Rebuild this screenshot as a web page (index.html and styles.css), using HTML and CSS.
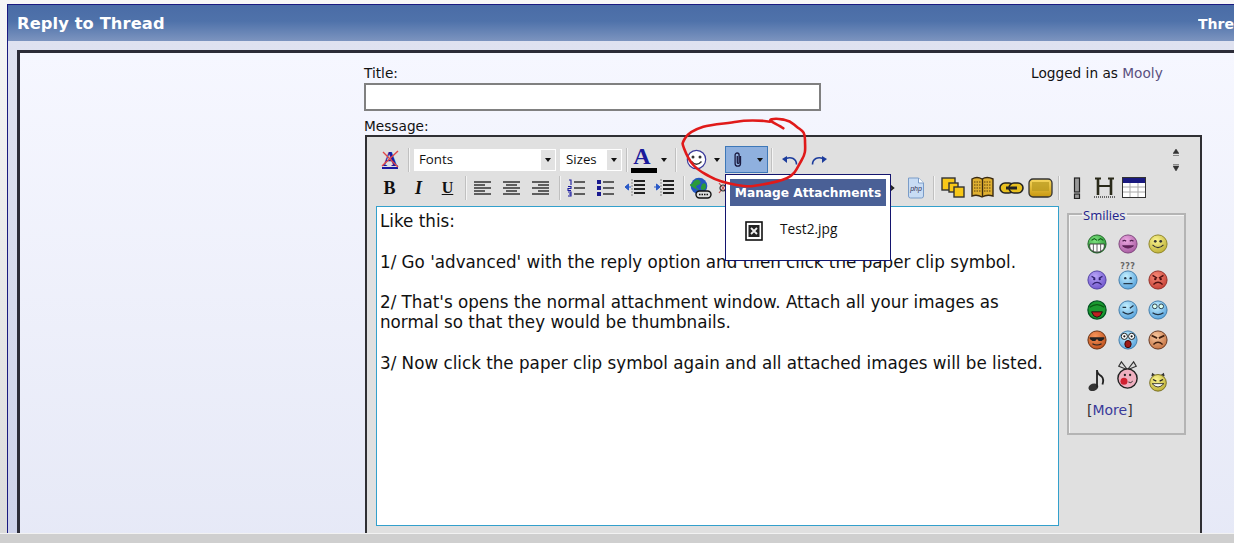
FILE: index.html
```html
<!DOCTYPE html>
<html lang="en">
<head>
<meta charset="utf-8">
<title>Reply to Thread</title>
<link rel="stylesheet" href="styles.css">
</head>
<body>
<svg class="defs" width="0" height="0" aria-hidden="true">
  <defs>
    <radialGradient id="gGreen" cx=".4" cy=".3" r=".8"><stop offset="0" stop-color="#7fe27f"/><stop offset="1" stop-color="#1c8f2c"/></radialGradient>
    <radialGradient id="gPink" cx=".4" cy=".3" r=".8"><stop offset="0" stop-color="#eda8e2"/><stop offset="1" stop-color="#a0559a"/></radialGradient>
    <radialGradient id="gYellow" cx=".4" cy=".3" r=".8"><stop offset="0" stop-color="#fbf590"/><stop offset="1" stop-color="#b8a92e"/></radialGradient>
    <radialGradient id="gPurple" cx=".4" cy=".3" r=".8"><stop offset="0" stop-color="#b8a4f8"/><stop offset="1" stop-color="#6a4fc8"/></radialGradient>
    <radialGradient id="gBlue" cx=".4" cy=".3" r=".8"><stop offset="0" stop-color="#c4f0ff"/><stop offset="1" stop-color="#4c9ad8"/></radialGradient>
    <radialGradient id="gRed" cx=".4" cy=".3" r=".8"><stop offset="0" stop-color="#f88a78"/><stop offset="1" stop-color="#c03a30"/></radialGradient>
    <radialGradient id="gOrange" cx=".4" cy=".3" r=".8"><stop offset="0" stop-color="#f8965a"/><stop offset="1" stop-color="#b84a18"/></radialGradient>
    <radialGradient id="gTan" cx=".4" cy=".3" r=".8"><stop offset="0" stop-color="#f8c8a0"/><stop offset="1" stop-color="#c06a38"/></radialGradient>
    <linearGradient id="gGold" x1="0" y1="0" x2="0" y2="1"><stop offset="0" stop-color="#f8d860"/><stop offset="1" stop-color="#c89810"/></linearGradient>
    <g id="lines-left"><path d="M1 2h17M1 5h11M1 8h17M1 11h11M1 14h17" stroke="#333" stroke-width="1.6" fill="none"/></g>
    <g id="lines-center"><path d="M1 2h17M4 5h11M1 8h17M4 11h11M1 14h17" stroke="#333" stroke-width="1.6" fill="none"/></g>
    <g id="lines-right"><path d="M1 2h17M7 5h11M1 8h17M7 11h11M1 14h17" stroke="#333" stroke-width="1.6" fill="none"/></g>
  </defs>
</svg>

<div class="page">
  <div class="view">
    <div class="frame">
      <div class="head">
        <span class="head-title">Reply to Thread</span>
        <span class="head-side">Thread Review</span>
      </div>
      <div class="band">
        <div class="inner">
          <div class="form">
            <div class="title-row">
              <div class="title-col">
                <div class="label">Title:</div>
                <input class="title-input" type="text" aria-label="Title">
              </div>
              <div class="logged">Logged in as <a class="user">Mooly</a></div>
            </div>
            <div class="label msg-label">Message:</div>

            <div class="editor">
              <div class="toolbar">
                <div class="tb-row">
                  <span class="cell">
                    <svg width="22" height="26" viewBox="0 0 22 26"><text x="11" y="19" class="t-clear">A</text><path d="M3 21h16" stroke="#1a1aa0" stroke-width="2"/><path d="M4 5L19 20M19 4L3 19" stroke="#e04848" stroke-width="1.4"/></svg>
                  </span>
                  <i class="sep sep-a"></i>
                  <span class="select select-font"><span class="select-text">Fonts</span><b class="select-arrow"></b></span>
                  <span class="select select-size"><span class="select-text">Sizes</span><b class="select-arrow"></b></span>
                  <i class="sep sep-b"></i>
                  <span class="color-a"><span class="color-letter">A</span><span class="color-bar"></span></span>
                  <b class="arrow arrow-color"></b>
                  <i class="sep sep-c"></i>
                  <svg class="smile-tool" width="21" height="21" viewBox="0 0 21 21"><circle cx="10.5" cy="10.5" r="9.2" fill="#fff" stroke="#3a3a9a" stroke-width="1.2"/><circle cx="7" cy="8" r="1.5" fill="#333"/><circle cx="14" cy="8" r="1.5" fill="#333"/><path d="M5.5 12.5q5 5.5 10 0" stroke="#333" stroke-width="1.4" fill="none"/></svg>
                  <b class="arrow arrow-smile"></b>
                  <span class="clip-btn">
                    <svg width="12" height="17" viewBox="0 0 12 17"><path d="M8.5 5v7.5a2.7 2.7 0 0 1-5.400 0V4a2 2 0 0 1 4 0v7.500a.9.900 0 0 1-1.800 0V5" fill="none" stroke="#1a1a40" stroke-width="1.300"/></svg>
                    <b class="arrow arrow-clip"></b>
                  </span>
                  <i class="sep sep-d"></i>
                  <svg class="undo" width="17" height="12" viewBox="0 0 17 12"><path d="M15.500 10.500C15.500 4.500 10 2.500 5 4.500" fill="none" stroke="#1c3c9c" stroke-width="1.600"/><path d="M1 5l5-3v7z" fill="#1c3c9c"/></svg>
                  <svg class="redo" width="17" height="12" viewBox="0 0 17 12"><path d="M1.500 10.500C1.500 4.500 7 2.500 12 4.500" fill="none" stroke="#1c3c9c" stroke-width="1.600"/><path d="M16 5l-5-3v7z" fill="#1c3c9c"/></svg>
                </div>
                <div class="tb-row">
                  <span class="cell"><span class="fmt fmt-b">B</span></span>
                  <span class="cell"><span class="fmt fmt-i">I</span></span>
                  <span class="cell"><span class="fmt fmt-u">U</span></span>
                  <i class="sep sep-e"></i>
                  <span class="cell"><svg width="19" height="16" viewBox="0 0 19 16"><use href="#lines-left"/></svg></span>
                  <span class="cell"><svg width="19" height="16" viewBox="0 0 19 16"><use href="#lines-center"/></svg></span>
                  <span class="cell"><svg width="19" height="16" viewBox="0 0 19 16"><use href="#lines-right"/></svg></span>
                  <i class="sep sep-f"></i>
                  <span class="cell"><svg width="19" height="18" viewBox="0 0 19 18"><path d="M7 3h11M7 9h11M7 15h11" stroke="#333" stroke-width="1.600"/><path d="M2 1h2v5M1 7.500h3v2H1v2h3M1 13h3v2H2h2v2H1" stroke="#1a1aa0" stroke-width="1.100" fill="none"/></svg></span>
                  <span class="cell"><svg width="19" height="18" viewBox="0 0 19 18"><path d="M7 3h11M7 9h11M7 15h11" stroke="#333" stroke-width="1.600"/><path d="M1 1h4v4H1zM1 7h4v4H1zM1 13h4v4H1z" fill="#1a1a90"/></svg></span>
                  <span class="cell"><svg width="22" height="20" viewBox="0 0 22 20"><path d="M10 3h11M10 7h11M10 11h11M10 15h11" stroke="#222" stroke-width="1.800"/><path d="M8 1v18" stroke="#888" stroke-dasharray="2 1"/><path d="M7 9H3M4.500 6L1 9l3.500 3z" stroke="#2a5ac8" fill="#2a5ac8"/></svg></span>
                  <span class="cell"><svg width="22" height="20" viewBox="0 0 22 20"><path d="M10 3h11M10 7h11M10 11h11M10 15h11" stroke="#222" stroke-width="1.800"/><path d="M8 1v18" stroke="#888" stroke-dasharray="2 1"/><path d="M1 9h4M3.500 6L7 9l-3.500 3z" stroke="#2a5ac8" fill="#2a5ac8"/></svg></span>
                  <i class="sep sep-g"></i>
                  <svg class="globe" width="22" height="22" viewBox="0 0 22 22"><circle cx="9" cy="9" r="8.300" fill="#2456c0"/><path d="M4 4q4-3 6 0t-2 4 0 4-4-1-2-4zM12 7q4-2 4 2t-3 4-2-3z" fill="#2a9a3a"/><rect x="6" y="14" width="15" height="7" rx="3.500" fill="#ddd" stroke="#111" stroke-width="1.400"/><path d="M9 17.500h9" stroke="#111" stroke-width="1.500" stroke-dasharray="1.500 1"/></svg>
                  <svg class="unlink" width="12" height="14" viewBox="0 0 12 14"><path d="M2 2l8 10M10 2L2 12" stroke="#c05050" stroke-width="1.200"/><circle cx="6" cy="7" r="3" fill="none" stroke="#333" stroke-width="1.200"/></svg>
                  <svg class="code" width="10" height="14" viewBox="0 0 10 14"><path d="M2 2l6 5-6 5" fill="none" stroke="#222" stroke-width="2.200"/></svg>
                  <svg class="php" width="18" height="22" viewBox="0 0 18 22"><path d="M1.500 1h10l5 5v13a2 2 0 0 1-2 2h-11a2 2 0 0 1-2-2z" fill="#c8dcf4" stroke="#7a9cc8"/><path d="M11.500 1v5h5" fill="#fff" stroke="#7a9cc8"/><text x="9" y="14" class="t-php">php</text></svg>
                  <i class="sep sep-h"></i>
                  <svg class="copy" width="24" height="21" viewBox="0 0 24 21"><rect x="1" y="1" width="13" height="12" fill="#f8c818" stroke="#333" stroke-width="1.400"/><rect x="8" y="6" width="9" height="9" fill="#f8c818" stroke="#333" stroke-width="1.400"/><rect x="13" y="10" width="10" height="10" fill="#f8c818" stroke="#333" stroke-width="1.400"/></svg>
                  <svg class="book" width="23" height="24" viewBox="0 0 23 24"><path d="M1 3q5-3 10 0 5-3 11 0v17q-6-2-11 1-5-3-10-1z" fill="#e0b030" stroke="#3a2a10" stroke-width="1.400"/><path d="M11.500 3v18" stroke="#3a2a10" stroke-width="1.400"/><path d="M3 6h7M3 9h7M3 12h7M3 15h7M13 6h7M13 9h7M13 12h7M13 15h7" stroke="#5a4010" stroke-dasharray="1.500 1"/></svg>
                  <svg class="chain" width="25" height="14" viewBox="0 0 25 14"><rect x="1" y="2" width="14" height="10" rx="5" fill="#e8c020" stroke="#222" stroke-width="1.600"/><rect x="10" y="2" width="14" height="10" rx="5" fill="#e8c020" stroke="#222" stroke-width="1.600"/><path d="M7 7h11" stroke="#222" stroke-width="3"/></svg>
                  <svg class="quote" width="25" height="20" viewBox="0 0 25 20"><rect x="1" y="1" width="23" height="18" rx="4" fill="url(#gGold)" stroke="#333" stroke-width="1.300"/><rect x="4" y="4" width="17" height="9" fill="#b89820" opacity=".7"/></svg>
                  <i class="sep sep-i"></i>
                  <svg class="warn" width="8" height="22" viewBox="0 0 8 22"><rect x="1.500" y="1" width="5" height="14" fill="#999" stroke="#222" stroke-width="1.200"/><rect x="1.500" y="17" width="5" height="4.500" fill="#999" stroke="#222" stroke-width="1.200"/></svg>
                  <svg class="hr" width="21" height="22" viewBox="0 0 21 22"><path d="M4 1v17M17 1v17" stroke="#2a2a1a" stroke-width="2.600"/><path d="M1 1.500h6M14 1.500h6M5 9h11" stroke="#2a2a1a" stroke-width="2"/><path d="M0 20h21" stroke="#666" stroke-width="2" stroke-dasharray="1 1"/></svg>
                  <svg class="table" width="24" height="21" viewBox="0 0 24 21"><rect x=".5" y=".5" width="23" height="20" fill="#fff" stroke="#333"/><rect x="1" y="1" width="22" height="5" fill="#1a1a80"/><path d="M1 10h22M1 15h22M8 6v14M16 6v14" stroke="#aaa"/></svg>
                </div>
                <div class="collapse">
                  <svg width="6" height="23" viewBox="0 0 6 23"><path d="M3 0l3 4.500H0zM0 6.500h6" fill="#333" stroke="#333" stroke-width=".5"/><path d="M0 15.500h6M0 17l3 5 3-5z" fill="#333" stroke="#333" stroke-width=".5"/></svg>
                </div>
              </div>

              <div class="editor-body">
                <div class="text-area">Like this:<br><br>1/ Go 'advanced' with the reply option and then click the paper clip symbol.<br><br>2/ That's opens the normal attachment window. Attach all your images as<br>normal so that they would be thumbnails.<br><br>3/ Now click the paper clip symbol again and all attached images will be listed.</div>
                <fieldset class="smilies">
                  <legend class="smilies-legend">Smilies</legend>
                  <div class="smilies-grid">
                    <svg class="face" viewBox="0 0 22 22"><circle cx="11" cy="11" r="10" fill="url(#gGreen)" stroke="#186020"/><path d="M3 11h16v3a8 6 0 0 1-16 0z" fill="#fff" stroke="#333"/><path d="M7 11v8M11 11v9M15 11v8" stroke="#555"/><path d="M5 7l3-2 3 2M12 7l3-2 3 2" fill="none" stroke="#0a5a14" stroke-width="1.200"/></svg>
                    <svg class="face" viewBox="0 0 22 22"><circle cx="11" cy="11" r="10" fill="url(#gPink)" stroke="#7a4078"/><path d="M5 8q2-2 4 0M13 8q2-2 4 0" fill="none" stroke="#502050" stroke-width="1.300"/><path d="M5 13q6 5 12 0z" fill="#702060" stroke="#502050"/></svg>
                    <svg class="face" viewBox="0 0 22 22"><circle cx="11" cy="11" r="10" fill="url(#gYellow)" stroke="#8a8020"/><circle cx="8" cy="8" r="1.500" fill="#333"/><circle cx="14" cy="8" r="1.500" fill="#333"/><path d="M5 12q6 6 12 0" fill="none" stroke="#333" stroke-width="1.300"/></svg>

                    <svg class="face" viewBox="0 0 22 22"><circle cx="11" cy="11" r="10" fill="url(#gPurple)" stroke="#4a3aa0"/><path d="M5 7l4 2M17 7l-4 2" stroke="#302070" stroke-width="1.300"/><circle cx="8" cy="10" r="1.300" fill="#302070"/><circle cx="14" cy="10" r="1.300" fill="#302070"/><path d="M6 16q5-5 10 0" fill="none" stroke="#302070" stroke-width="1.300"/></svg>
                    <span class="face-wrap"><span class="qqq">???</span><svg class="face" viewBox="0 0 22 22"><circle cx="11" cy="11" r="10" fill="url(#gBlue)" stroke="#3a78a8"/><circle cx="8" cy="9" r="1.300" fill="#234"/><circle cx="14" cy="9" r="1.300" fill="#234"/><path d="M6 15h10" stroke="#234" stroke-width="1.300"/></svg></span>
                    <svg class="face" viewBox="0 0 22 22"><circle cx="11" cy="11" r="10" fill="url(#gRed)" stroke="#902820"/><path d="M5 6l5 3M17 6l-5 3" stroke="#501010" stroke-width="1.600"/><circle cx="8" cy="10" r="1.300" fill="#501010"/><circle cx="14" cy="10" r="1.300" fill="#501010"/><path d="M6 16q5-5 10 0" fill="none" stroke="#501010" stroke-width="1.400"/></svg>

                    <svg class="face" viewBox="0 0 22 22"><circle cx="11" cy="11" r="10" fill="#1a9a30" stroke="#052"  stroke-width="1.400"/><path d="M3 8q8-6 16 0" fill="none" stroke="#0a5a14" stroke-width="1.300"/><path d="M5 13h12q-2 6-6 6t-6-6z" fill="#c02020" stroke="#111"/></svg>
                    <svg class="face" viewBox="0 0 22 22"><circle cx="11" cy="11" r="10" fill="url(#gBlue)" stroke="#3a78a8"/><path d="M5 8h4M13 9l4-3" stroke="#234" stroke-width="1.400"/><path d="M5 13q6 5 12 0" fill="none" stroke="#234" stroke-width="1.400"/></svg>
                    <svg class="face" viewBox="0 0 22 22"><circle cx="11" cy="11" r="10" fill="url(#gBlue)" stroke="#3a78a8"/><circle cx="7.500" cy="7" r="2.600" fill="#dfe" stroke="#234"/><circle cx="14.500" cy="7" r="2.600" fill="#dfe" stroke="#234"/><path d="M5 14q6 4 12 0" fill="none" stroke="#234" stroke-width="1.400"/></svg>

                    <svg class="face" viewBox="0 0 22 22"><circle cx="11" cy="11" r="10" fill="url(#gOrange)" stroke="#602808"/><path d="M3 8h16v2l-3 2h-3l-2-2-2 2H6l-3-2z" fill="#222"/><path d="M6 15q5 3 10 0" fill="none" stroke="#222" stroke-width="1.300"/></svg>
                    <svg class="face" viewBox="0 0 22 22"><circle cx="11" cy="11" r="10" fill="url(#gBlue)" stroke="#3a78a8"/><circle cx="7" cy="7" r="3.400" fill="#fff" stroke="#111"/><circle cx="15" cy="7" r="3.400" fill="#fff" stroke="#111"/><circle cx="7" cy="7" r="1.200" fill="#111"/><circle cx="15" cy="7" r="1.200" fill="#111"/><ellipse cx="11" cy="15.500" rx="3.500" ry="4" fill="#a01c18" stroke="#300"/></svg>
                    <svg class="face" viewBox="0 0 22 22"><circle cx="11" cy="11" r="10" fill="url(#gTan)" stroke="#603018"/><path d="M4 6l6 3M18 6l-6 3" stroke="#402010" stroke-width="2"/><path d="M6 16q5-5 10 0" fill="none" stroke="#402010" stroke-width="1.500"/></svg>

                    <svg class="face face-note" viewBox="0 0 22 26"><ellipse cx="7" cy="21" rx="5.500" ry="4" fill="#333" transform="rotate(-20 7 21)"/><path d="M11 21V2q0 4 5 7 3 3 1 9" fill="none" stroke="#222" stroke-width="2"/></svg>
                    <svg class="face face-pig" viewBox="0 0 24 34"><path d="M12 11L5 2l-3 5zM12 11l7-9 3 5z" fill="#ddd" stroke="#333" stroke-width="1.300"/><circle cx="12" cy="21" r="11" fill="#f0b0c0" stroke="#222" stroke-width="1.600"/><circle cx="8" cy="24" r="4" fill="#d02030"/><circle cx="9" cy="17" r="1.300" fill="#222"/><circle cx="15" cy="17" r="1.300" fill="#222"/><path d="M13 25q3 2 5-1" fill="none" stroke="#222"/></svg>
                    <svg class="face face-devil" viewBox="0 0 22 24"><path d="M3 5l1-4 4 3zM19 5l-1-4-4 3z" fill="#333"/><circle cx="11" cy="13" r="10" fill="url(#gYellow)" stroke="#6a6010"/><path d="M5 9l4 2M17 9l-4 2" stroke="#222" stroke-width="1.500"/><path d="M4 14q7 8 14 0z" fill="#fff" stroke="#222"/></svg>
                  </div>
                  <div class="more">[<a class="more-link">More</a>]</div>
                </fieldset>
              </div>
            </div>
          </div>

          <div class="popup">
            <div class="popup-head">Manage Attachments</div>
            <div class="popup-item">
              <svg width="18" height="20" viewBox="0 0 18 20"><rect x="1" y="1" width="16" height="18" fill="#fff" stroke="#111" stroke-width="1.600"/><rect x="3.500" y="4" width="11" height="12" fill="#222"/><path d="M6 7l6 6M12 7l-6 6" stroke="#eee" stroke-width="1.800"/></svg>
              <span class="popup-name">Test2.jpg</span>
            </div>
          </div>
        </div>
      </div>
    </div>
    <svg class="scribble" width="140" height="80" viewBox="680 115 140 80"><path d="M770 121.700C760 120 745 120 736.700 121.700S712 124 703.300 126.700 688 133 685 138.300 682 143 684 148.300 688 159 693.300 165 702 172 710 176.700 725 183 736.700 185 751 186.500 760 185 778 182 786.700 178.300 797 168 801.700 160 805 149 805 140 802 131 796.700 126.700 791 121 785 120 777 118 771.700 119.300 778 124 783.300 128.300" fill="none" stroke="#e01a1a" stroke-width="2.600" stroke-linecap="round"/></svg>
  </div>
  <div class="strip"></div>
</div>
</body>
</html>
```

FILE: styles.css
```css
* { box-sizing: border-box; }
html, body { margin: 0; padding: 0; height: 100%; overflow: hidden; }
body { font-family: "DejaVu Sans", Verdana, sans-serif; color: #111; background: #fff; }
.defs { position: absolute; }
svg { display: block; flex: none; }

.page { display: flex; flex-direction: column; width: 1234px; height: 543px; overflow: hidden; }
.view { position: relative; height: 533px; padding: 4px 0 0 7px; overflow: hidden; background: linear-gradient(#f6f6f6, #dcdcdc); }
.strip { height: 10px; background: #cfcfcf; border-top: 1px solid #f2f2f2; }

.frame { height: 560px; width: 1240px; border-left: 1px solid #1a1a80; border-top: 1px solid #1a1a80; }
.head { display: flex; justify-content: space-between; height: 36px; padding: 1px 0 0 9px; align-items: center; background: linear-gradient(#4a6ca6 0%, #4f72aa 45%, #7c94bf 100%); color: #fff; font-weight: bold; white-space: nowrap; overflow: hidden; }
.head-title { font-size: 16.300px; letter-spacing: .1px; }
.head-side { font-size: 14px; width: 50px; margin-right: 6px; overflow: hidden; flex: none; position: relative; left: 7px; }

.band { position: relative; height: 520px; padding: 9px 0 0 9px; background: linear-gradient(#dfe2f0, #cdd2ea); }
.inner { height: 520px; padding: 0 0 0 344px; border-left: 3px solid #2c2c38; border-top: 3px solid #2c2c38; background: linear-gradient(#f6f7ff, #e5e8f6); }

.form { width: 838px; }
.title-row { display: flex; padding-top: 11px; }
.title-col { width: 667px; flex: none; }
.label { font-size: 13.700px; line-height: 19px; height: 19px; }
.title-input { display: block; width: 457px; height: 28px; border: 2px solid #808080; background: #fff; padding: 0; margin: 0; outline: 0; }
.logged { font-size: 13.700px; line-height: 19px; white-space: nowrap; }
.user { color: #5a5080; }
.msg-label { margin-top: 6px; height: 18px; margin-bottom: 0; padding-left: 0; }

.editor { width: 837px; margin-left: 1px; height: 440px; border: 2px solid #2f2f33; border-bottom: 0; background: #e0e0e0; position: relative; }
.toolbar { padding: 9px 0 0 8px; height: 69px; }
.tb-row { display: flex; align-items: center; height: 27px; margin-bottom: 1px; }

.cell { display: flex; width: 29px; height: 26px; justify-content: center; align-items: center; flex: none; }
.t-clear { font: bold 21px "Liberation Serif", serif; fill: #1a1aa0; text-anchor: middle; }
.sep { display: block; width: 1px; height: 24px; background: #c0c0c0; flex: none; box-shadow: 1px 0 0 #f4f4f4; }
.sep-a { margin: 0 5px 0 4px; }
.sep-b { margin: 0 4px 0 4px; }
.sep-c { margin: 0 10px 0 8px; }
.sep-d { margin: 0 9px 0 3px; }
.sep-e { margin: 0 2px 0 3px; }
.sep-f { margin: 0 2px 0 4px; }
.sep-g { margin: 0 6px 0 5px; }
.sep-h { margin: 0 7px 0 8px; }
.sep-i { margin: 0 14px 0 5px; }

.select { display: flex; align-items: center; height: 22px; background: #fff; flex: none; }
.select-font { width: 142px; }
.select-size { width: 62px; margin-left: 4px; }
.select-text { flex: 1; padding-left: 5px; font: 13.300px/20px "Open Sans", sans-serif; color: #111; height: 20px; margin-top: -2px; }
.select-size .select-text { padding-left: 6px; }
.select-arrow { position: relative; width: 14px; height: 20px; margin-right: 1px; background: #e2e2e2; flex: none; }
.select-arrow::after, .arrow { content: ""; display: block; width: 0; height: 0; border: 3.500px solid transparent; border-top: 4px solid #111; border-bottom: 0; flex: none; }
.select-arrow::after { position: absolute; left: 3.500px; top: 8px; }

.color-a { display: flex; flex-direction: column; width: 26px; height: 27px; align-items: center; flex: none; padding-right: 4px; }
.color-letter { font: bold 24px/21px "Liberation Serif", serif; color: #1a1a9a; height: 22px; }
.color-bar { width: 26px; height: 5px; background: #000; flex: none; margin-right: -4px; }
.arrow-color { margin: 0 0 0 4px; }
.arrow-smile { margin: 0 0 0 7px; }
.arrow-clip { margin-left: 13px; }
.smile-tool { margin: 0; }
.clip-btn { display: flex; align-items: center; width: 43px; height: 27px; margin-left: 5px; padding-left: 6px; background: #8fb0de; border: 1px solid #3e78b8; flex: none; }

.undo { margin: 0 0 0 0; }
.redo { margin-left: 13px; }

.fmt { font-family: "Liberation Serif", serif; font-weight: bold; font-size: 18px; line-height: 20px; color: #111; }
.fmt-i { font-style: italic; }
.fmt-u { text-decoration: underline; font-size: 16px; }

.unlink { margin-left: 5px; }
.code { margin-left: 156px; }
.php { margin-left: 12px; }
.t-php { font: italic 7px "Liberation Sans", sans-serif; fill: #335; text-anchor: middle; }
.book { margin-left: 6px; }
.chain { margin-left: 5px; }
.quote { margin-left: 4px; }
.hr { margin-left: 13px; margin-right: 7px; }
.warn { margin-left: 0; }

.collapse { position: absolute; left: 806px; top: 12px; }

.editor-body { display: flex; padding-left: 9px; align-items: flex-start; }
.text-area { flex: none; width: 683px; height: 320px; padding: 4px 3px; border: 1px solid #33a0cc; background: #fff; font-size: 16.750px; line-height: 20.300px; color: #111; white-space: nowrap; }

.smilies { width: 119px; height: 229px; margin: 0 0 0 8px; padding: 0 0 0 13px; border: 2px solid #b4b4b4; box-shadow: inset 1px 1px 0 #f4f4f4; flex: none; position: relative; }
.smilies-legend { position: relative; top: 2px; margin-left: 0; padding: 0 1px; font: 13px/15px "Open Sans", sans-serif; color: #22228c; }
.smilies-grid { display: grid; grid-template-columns: repeat(3, 30.500px); grid-template-rows: 42px 30px 30px 30px 50px; padding-top: 2px; justify-items: center; align-items: center; }
.face { width: 20px; height: 20px; }
.face-wrap { position: relative; display: block; }
.qqq { position: absolute; top: -8px; left: 0; width: 20px; text-align: center; font: bold 8px/10px "DejaVu Sans", sans-serif; color: #666; letter-spacing: .4px; }
.face-note { width: 20px; height: 24px; }
.face-pig { width: 21px; height: 32px; margin-top: -10px; }
.face-devil { height: 20px; margin-top: 4px; }
.more { font-size: 14px; line-height: 18px; margin: -4px 0 0 5px; color: #333; }
.more-link { color: #3a3a9a; }

.popup { position: absolute; left: 717px; top: 133px; width: 166px; height: 87px; padding: 4px; border: 1px solid #14146e; background: #fff; }
.popup-head { height: 27px; background: #4a6096; color: #fff; font-weight: bold; font-size: 12.200px; line-height: 28px; text-align: center; white-space: nowrap; }
.popup-item { display: flex; align-items: center; padding: 15px 0 0 15px; }
.popup-name { margin-left: 17px; font: 13.700px/20px "Open Sans", sans-serif; color: #111; position: relative; top: -2px; }

.scribble { position: absolute; left: 680px; top: 115px; pointer-events: none; }
```
